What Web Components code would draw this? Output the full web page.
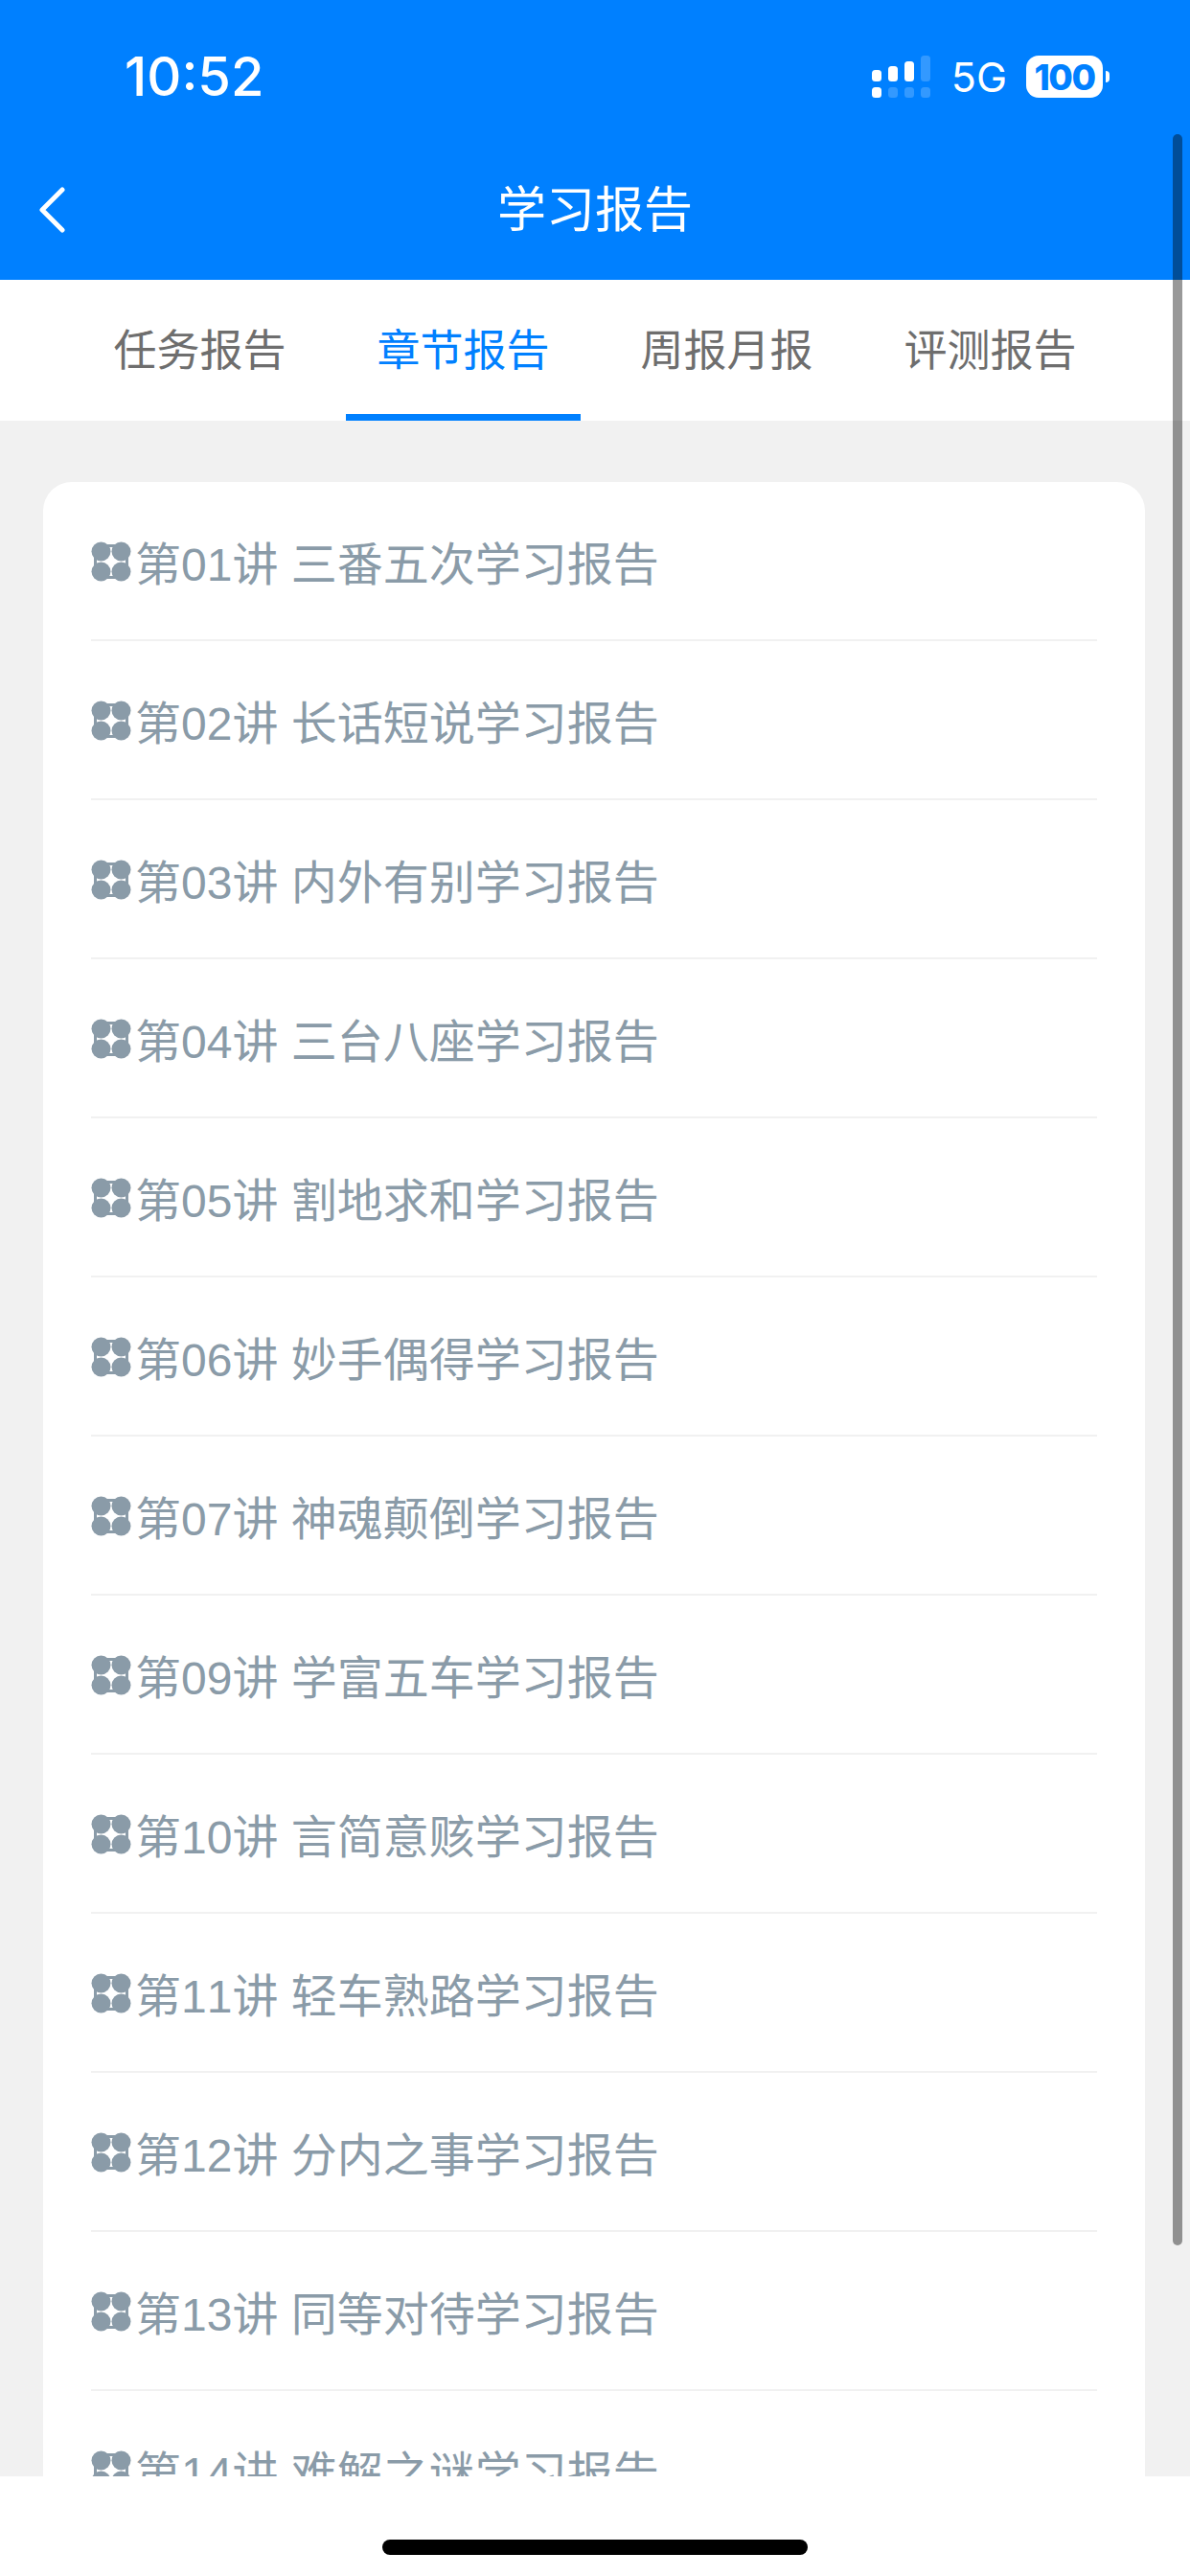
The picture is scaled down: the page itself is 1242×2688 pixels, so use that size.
<!DOCTYPE html>
<html lang="zh">
<head>
<meta charset="utf-8">
<title>学习报告</title>
<style>
  html, body { margin: 0; height: 2688px; overflow: hidden; }
  body {
    position: relative;
    display: flex;
    flex-direction: column;
    background: #f1f1f1;
    font-family: "Liberation Sans", "Noto Sans CJK SC", sans-serif;
  }
</style>
</head>
<body>
<status-bar></status-bar>
<nav-bar>学习报告</nav-bar>
<report-tabs>
  <tab-item>任务报告</tab-item>
  <tab-item active>章节报告</tab-item>
  <tab-item>周报月报</tab-item>
  <tab-item>评测报告</tab-item>
</report-tabs>
<report-list>
  <report-row>第01讲 三番五次学习报告</report-row>
  <report-row>第02讲 长话短说学习报告</report-row>
  <report-row>第03讲 内外有别学习报告</report-row>
  <report-row>第04讲 三台八座学习报告</report-row>
  <report-row>第05讲 割地求和学习报告</report-row>
  <report-row>第06讲 妙手偶得学习报告</report-row>
  <report-row>第07讲 神魂颠倒学习报告</report-row>
  <report-row>第09讲 学富五车学习报告</report-row>
  <report-row>第10讲 言简意赅学习报告</report-row>
  <report-row>第11讲 轻车熟路学习报告</report-row>
  <report-row>第12讲 分内之事学习报告</report-row>
  <report-row>第13讲 同等对待学习报告</report-row>
  <report-row>第14讲 难解之谜学习报告</report-row>
</report-list>
<home-bar></home-bar>
<scroll-thumb></scroll-thumb>

<script>
class StatusBar extends HTMLElement {
  constructor() {
    super();
    this.attachShadow({ mode: "open" });
    this.shadowRoot.innerHTML = `
    <style>
      :host {
        display: flex;
        flex: none;
        height: 160px;
        align-items: center;
        justify-content: space-between;
        padding: 0 84px 0 130px;
        background: #0080ff;
        color: #fff;
      }
      .time { font: 500 56px/1 Inter, sans-serif; }
      .right { display: flex; align-items: center; }
      svg { display: block; }
      .net { font: 400 43px/1 Inter, sans-serif; margin: 0 20px; }
      .battery {
        display: flex;
        align-items: center;
        justify-content: center;
        width: 80px;
        height: 44px;
        border-radius: 13px;
        background: #fff;
        color: #0080ff;
        font: 800 37px/1 Inter, sans-serif;
        letter-spacing: -1.5px;
      }
      .nub { width: 4px; height: 12px; margin-left: 3px; border-radius: 0 6px 6px 0; background: #fff; }
    </style>
    <span class="time">10:52</span>
    <div class="right">
      <svg width="63" height="44" viewBox="0 0 63 44" fill="#fff">
        <rect x="0" y="15" width="10" height="12" rx="3.5"/>
        <rect x="17" y="11" width="10" height="16" rx="3.5"/>
        <rect x="34" y="6" width="10" height="21" rx="3.5"/>
        <rect x="51" y="0" width="10" height="27" rx="3.5" opacity=".2"/>
        <rect x="0" y="33" width="10" height="11" rx="3.5"/>
        <rect x="17" y="33" width="10" height="11" rx="3.5" opacity=".2"/>
        <rect x="34" y="33" width="10" height="11" rx="3.5" opacity=".2"/>
        <rect x="51" y="33" width="10" height="11" rx="3.5" opacity=".2"/>
      </svg>
      <span class="net">5G</span>
      <span class="battery">100</span>
      <span class="nub"></span>
    </div>`;
  }
}

class NavBar extends HTMLElement {
  constructor() {
    super();
    this.attachShadow({ mode: "open" });
    this.shadowRoot.innerHTML = `
    <style>
      :host {
        display: grid;
        flex: none;
        grid-template-columns: 1fr auto 1fr;
        align-items: center;
        height: 118px;
        padding-bottom: 14px;
        background: #0080ff;
        color: #fff;
        font-size: 51px;
        line-height: 1;
      }
      svg { display: block; margin-left: 40px; }
    </style>
    <svg width="30" height="48" viewBox="0 0 30 48" fill="none" stroke="#fff" stroke-width="5" stroke-linecap="round" stroke-linejoin="round">
      <path d="M25 3 L4 24 L25 45"/>
    </svg>
    <slot></slot>`;
  }
}

class ReportTabs extends HTMLElement {
  constructor() {
    super();
    this.attachShadow({ mode: "open" });
    this.shadowRoot.innerHTML = `
    <style>
      :host {
        display: grid;
        flex: none;
        grid-template-columns: repeat(4, 1fr);
        height: 147px;
        padding: 0 71px;
        background: #fff;
      }
    </style>
    <slot></slot>`;
  }
}

class TabItem extends HTMLElement {
  constructor() {
    super();
    this.attachShadow({ mode: "open" });
    this.shadowRoot.innerHTML = `
    <style>
      :host {
        display: flex;
        justify-content: center;
        color: #6e6e6e;
        font-size: 45px;
      }
      :host([active]) { color: #0080ff; }
      .label {
        display: flex;
        align-items: center;
        box-sizing: border-box;
        height: 100%;
        padding: 0 32px;
        border-bottom: 7px solid transparent;
      }
      :host([active]) .label { border-bottom-color: #0080ff; }
    </style>
    <span class="label"><slot></slot></span>`;
  }
}

class ReportList extends HTMLElement {
  constructor() {
    super();
    this.attachShadow({ mode: "open" });
    this.shadowRoot.innerHTML = `
    <style>
      :host {
        display: block;
        flex: 1;
        min-height: 0;
        overflow: hidden;
        padding: 64px 47px 0 45px;
      }
      .card {
        padding: 0 50px;
        border-radius: 30px 30px 0 0;
        background: #fff;
      }
    </style>
    <div class="card"><slot></slot></div>`;
  }
}

class ReportRow extends HTMLElement {
  constructor() {
    super();
    this.attachShadow({ mode: "open" });
    this.shadowRoot.innerHTML = `
    <style>
      :host {
        display: flex;
        box-sizing: border-box;
        align-items: center;
        height: 166px;
        padding-top: 2px;
        border-bottom: 2px solid #f1f1f1;
        color: #8a9ba8;
        font-size: 48px;
        font-kerning: none;
        white-space: pre;
      }
      svg { display: block; flex: none; margin-right: 4px; }
      .text { padding-bottom: 3px; }
    </style>
    <svg width="42" height="42" viewBox="0 0 42 42" fill="#8a9ba8">
      <rect x="10" y="3" width="22" height="3"/>
      <rect x="10" y="36" width="22" height="3"/>
      <rect x="3" y="10" width="3" height="22"/>
      <rect x="36" y="10" width="3" height="22"/>
      <circle cx="10.5" cy="10.5" r="10"/>
      <circle cx="31.5" cy="10.5" r="10"/>
      <circle cx="10.5" cy="31.5" r="10"/>
      <circle cx="31.5" cy="31.5" r="10"/>
    </svg>
    <span class="text"><slot></slot></span>`;
  }
}

class HomeBar extends HTMLElement {
  constructor() {
    super();
    this.attachShadow({ mode: "open" });
    this.shadowRoot.innerHTML = `
    <style>
      :host {
        display: flex;
        flex: none;
        justify-content: center;
        box-sizing: border-box;
        height: 104px;
        padding-top: 66px;
        background: #fff;
      }
      .bar { width: 444px; height: 16px; border-radius: 8px; background: #000; }
    </style>
    <div class="bar"></div>`;
  }
}

class ScrollThumb extends HTMLElement {
  constructor() {
    super();
    this.attachShadow({ mode: "open" });
    this.shadowRoot.innerHTML = `
    <style>
      :host {
        position: absolute;
        top: 140px;
        left: 1224px;
        width: 10px;
        height: 2203px;
        border-radius: 5px;
        background: rgba(0, 0, 0, .4);
      }
    </style>`;
  }
}

customElements.define("status-bar", StatusBar);
customElements.define("nav-bar", NavBar);
customElements.define("report-tabs", ReportTabs);
customElements.define("tab-item", TabItem);
customElements.define("report-list", ReportList);
customElements.define("report-row", ReportRow);
customElements.define("home-bar", HomeBar);
customElements.define("scroll-thumb", ScrollThumb);
</script>
</body>
</html>
